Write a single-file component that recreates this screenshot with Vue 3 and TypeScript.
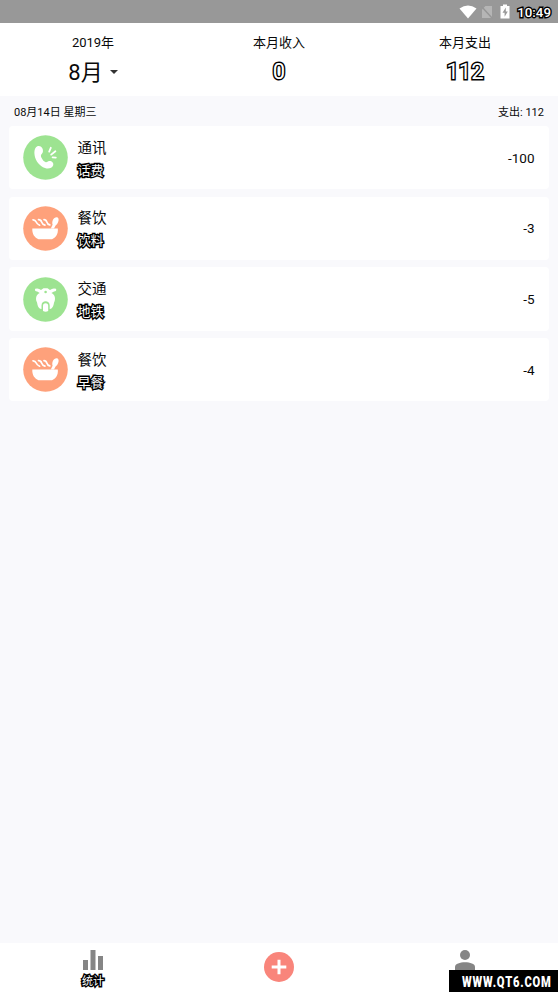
<script setup lang="ts">
type Kind = 'phone' | 'food' | 'scooter'

interface Entry {
  id: number
  kind: Kind
  category: string
  note: string
  amount: number
}

const entries: Entry[] = [
  { id: 1, kind: 'phone', category: '通讯', note: '话费', amount: -100 },
  { id: 2, kind: 'food', category: '餐饮', note: '饮料', amount: -3 },
  { id: 3, kind: 'scooter', category: '交通', note: '地铁', amount: -5 },
  { id: 4, kind: 'food', category: '餐饮', note: '早餐', amount: -4 },
]
</script>

<template>
  <div class="screen">
    <header class="status">
      <svg class="wifi" viewBox="0 0 18 14"><path d="M0.5 3.6Q9 -2.6 17.5 3.6L9 13.6Z" fill="#fff" /></svg>
      <svg class="sim" viewBox="0 0 12 14">
        <path d="M4.5 1H11V13H1V4.5Z" fill="#b5b5b5" />
        <path d="M0.5 1.5L11.5 13.5" stroke="#969696" stroke-width="1.5" />
      </svg>
      <svg class="battery" viewBox="0 0 10 15">
        <path d="M3 0.5H7V2H9.5V14.5H0.5V2H3Z" fill="#fff" />
        <path d="M5.8 3.5L2.5 8.7H4.6V12.8L7.8 7.4H5.8Z" fill="#999" />
      </svg>
      <span class="clock outlined">10:49</span>
    </header>

    <section class="summary">
      <div class="cell">
        <span class="label">2019年</span>
        <span class="month">8月<i class="caret"></i></span>
      </div>
      <div class="cell">
        <span class="label">本月收入</span>
        <span class="total outlined">0</span>
      </div>
      <div class="cell">
        <span class="label">本月支出</span>
        <span class="total outlined">112</span>
      </div>
    </section>

    <main class="content">
      <div class="day"><span>08月14日 星期三</span><span>支出: 112</span></div>
      <div class="list">
        <article v-for="e in entries" :key="e.id" class="card">
          <svg class="icon" viewBox="0 0 45 45">
            <circle cx="22.5" cy="22.5" r="22.3" :fill="e.kind === 'food' ? '#fea17b' : '#9de391'" />
            <g v-if="e.kind === 'phone'">
              <path d="M13 12.3C14.8 10.2 18 10.7 19.2 13C20.3 15 20.3 17.6 18.7 19C17.7 20 17.7 21.2 18.5 22.8C19.6 25.1 21 26.7 22.8 27.3C24.1 27.7 24.5 26.3 26.2 26.1C28.6 25.8 31 28 30.2 30.2C29.1 33 25.6 34.3 22 33C16.5 31 12.4 25.7 11.6 20.2C11.1 17 11.4 14.2 13 12.3Z" fill="#fff" />
              <path d="M26.2 16.6L27.8 12.8M28.2 19.6L32.4 16.2M29.6 22.4L32.8 22.7" fill="none" stroke="#fff" stroke-width="1.8" stroke-linecap="round" />
            </g>
            <g v-else-if="e.kind === 'food'">
              <path d="M9.3 22.5H34.8C35.4 28.2 32.5 31.8 29 33.2H15.5C11.6 31.6 9 28.2 9.3 22.5Z" fill="#fff" />
              <path d="M10 13.8Q12.2 13.7 13.2 16T16.6 19.2M15.5 13.6Q17.8 13.5 18.6 15.9T22 19.1M21 13.6Q23.1 13.6 23.8 15.9T26.8 18.9" fill="none" stroke="#fff" stroke-width="1.7" stroke-linecap="round" />
              <path d="M27.8 22.5L29.6 18.8C28.5 15.6 30.5 11.2 33.7 11.3C36.8 11.6 36 17 32.6 19.5L31 22.5Z" fill="#fff" />
            </g>
            <g v-else>
              <path d="M12.2 11.7Q15.6 10.7 18 13L20.5 11.3H24.5L27 13Q29.5 10.7 33 11.7Q34 14.1 31 14.5L28.4 16C32.3 17.6 32.6 22 31.4 24.8C30.4 27 31 29.8 28 31.8L26.7 32V28.5C26.7 22.9 18.5 22.9 18.5 28.5V32L17.1 31.8C14.1 29.8 14.8 27 13.7 24.8C12.5 22 12.8 17.6 16.7 16L14.2 14.5Q11.2 14.1 12.2 11.7Z" fill="#fff" />
              <circle cx="22.6" cy="15" r="1.3" fill="#9de391" />
              <path d="M20 34V28.8Q20 26.2 22.6 26.2T25.2 28.8V34Q22.6 35.3 20 34Z" fill="#fff" />
            </g>
          </svg>
          <div class="text">
            <span class="category">{{ e.category }}</span>
            <span class="note outlined">{{ e.note }}</span>
          </div>
          <span class="amount">{{ e.amount }}</span>
        </article>
      </div>
    </main>

    <nav class="tabs">
      <div class="tab">
        <svg class="bars" viewBox="0 0 20 20"><path d="M0 10H5V20H0ZM7.5 0H12.5V20H7.5ZM15 6H20V20H15Z" fill="#858585" /></svg>
        <span class="tab-label outlined">统计</span>
      </div>
      <div class="tab middle">
        <svg class="add" viewBox="0 0 30 30">
          <circle cx="15" cy="15" r="15" fill="#f9857b" />
          <path d="M15 7.7V22.3M7.7 15H22.3" stroke="#fff" stroke-width="3" />
        </svg>
      </div>
      <div class="tab">
        <svg class="person" viewBox="0 0 20 20"><circle cx="10" cy="5" r="5" fill="#858585" /><path d="M0 20V17C0 10.8 20 10.8 20 17V20Z" fill="#858585" /></svg>
      </div>
    </nav>
    <div class="site"><svg viewBox="0 0 109 22"><text transform="translate(13 17.3) scale(0.72 1)">WWW.QT6.COM</text></svg></div>
  </div>
</template>

<style>
body { margin: 0; }
</style>

<style scoped>
.screen {
  position: relative;
  display: flex;
  flex-direction: column;
  height: 992px;
  overflow: hidden;
  background: #f9f9fc;
  color: #0a0a0a;
  font-family: Roboto, "Noto Sans CJK SC", sans-serif;
}
.outlined {
  color: #fff;
  -webkit-text-stroke: 2.8px #000;
  paint-order: stroke fill;
}
.status {
  display: flex;
  align-items: center;
  justify-content: flex-end;
  flex: none;
  box-sizing: border-box;
  height: 23px;
  padding-right: 7px;
  background: #989898;
}
.wifi { width: 18px; height: 14px; margin-right: 4px; }
.sim { width: 12px; height: 14px; margin-right: 7px; }
.battery { width: 10px; height: 15px; margin-right: 7px; }
.clock { font-size: 13.3px; line-height: 23px; font-weight: 500; padding-top: 1px; }
.summary {
  display: grid;
  grid-template-columns: repeat(3, 1fr);
  flex: none;
  height: 73px;
  background: #fff;
}
.cell { display: flex; flex-direction: column; align-items: center; padding-top: 11px; }
.label { font-size: 13px; line-height: 18px; }
.month, .total { display: flex; align-items: center; height: 30px; margin-top: 5px; font-size: 22px; line-height: 30px; }
.month { margin-top: 6px; }
.caret {
  margin-left: 7px;
  border: 4.5px solid transparent;
  border-top-color: #333;
  border-bottom: 0;
  transform: translateY(-1px);
}
.content { flex: 1; padding: 0 9px; }
.day {
  display: flex;
  align-items: center;
  justify-content: space-between;
  height: 30px;
  padding: 0 5px;
  font-size: 11px;
}
.list { display: flex; flex-direction: column; gap: 7.4px; }
.card {
  display: flex;
  align-items: center;
  box-sizing: border-box;
  height: 63.3px;
  padding: 0 14.5px 0 14px;
  border-radius: 4px;
  background: #fff;
}
.icon { width: 45px; height: 45px; margin-right: 9.5px; }
.text { display: flex; flex: 1; flex-direction: column; padding-top: 3px; }
.category { font-size: 14.5px; line-height: 23px; }
.note { font-size: 13px; line-height: 22px; }
.amount { font-size: 13.5px; }
.tabs {
  display: grid;
  grid-template-columns: repeat(3, 1fr);
  flex: none;
  height: 49px;
  background: #fff;
}
.tab { display: flex; flex-direction: column; align-items: center; padding-top: 7px; }
.tab.middle { padding-top: 9px; }
.bars, .person { width: 20px; height: 20px; }
.add { width: 30px; height: 30px; }
.tab-label { font-size: 11px; line-height: 16px; margin-top: 4px; }
.site { position: absolute; right: 0; bottom: 0; width: 109px; height: 22px; background: #000; }
.site svg { display: block; width: 109px; height: 22px; }
.site text { fill: #fff; font: 900 15.5px Roboto, sans-serif; letter-spacing: 1.1px; }
</style>
